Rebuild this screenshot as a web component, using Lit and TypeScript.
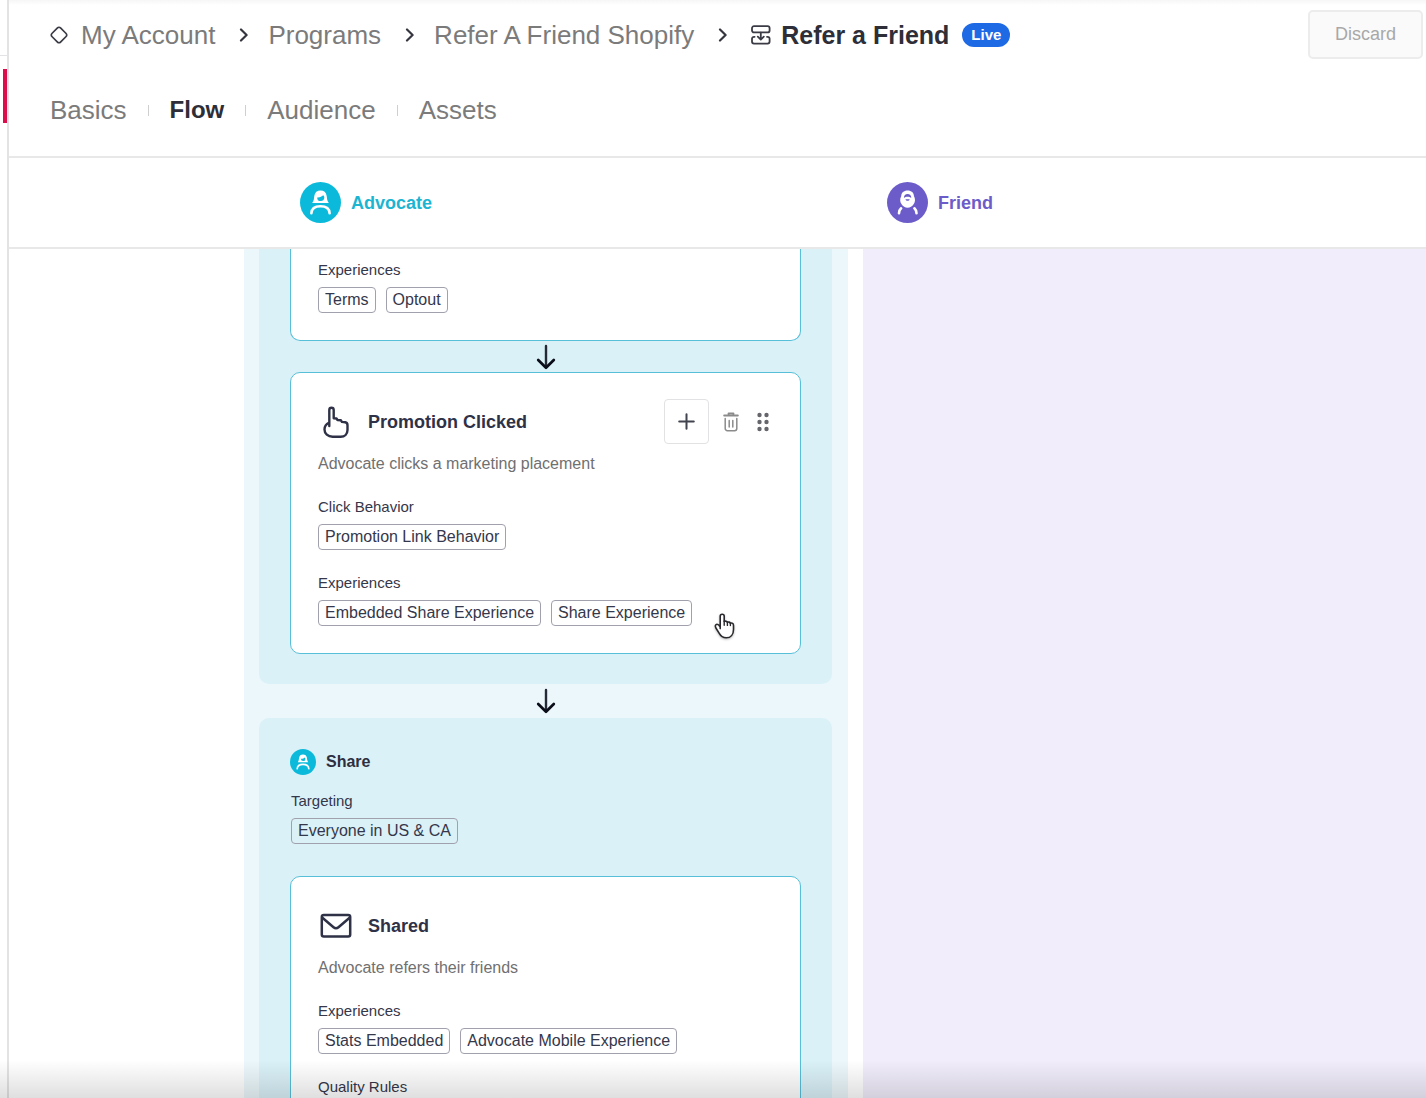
import { LitElement, html, css, svg, nothing } from "lit";
import { customElement, property } from "lit/decorators.js";

interface Section {
  label: string;
  chips: string[];
}

const icons = {
  diamond: svg`<svg width="18" height="18" viewBox="0 0 18 18" fill="none" stroke="#3a3b45" stroke-width="1.7" aria-hidden="true">
    <path d="M7.5 1.9 1.9 7.5a2.1 2.1 0 0 0 0 3l5.6 5.6a2.1 2.1 0 0 0 3 0l5.6-5.6a2.1 2.1 0 0 0 0-3l-5.6-5.6a2.1 2.1 0 0 0-3 0z"/></svg>`,
  chevron: svg`<svg width="13" height="14" viewBox="0 0 13 14" fill="none" stroke="#34353f" stroke-width="2.2" stroke-linecap="round" stroke-linejoin="round" aria-hidden="true">
    <path d="M4 1.5 9.6 7 4 12.5"/></svg>`,
  flow: svg`<svg width="20" height="20" viewBox="0 0 20 20" fill="none" stroke="#3a3b45" stroke-width="1.8" stroke-linecap="round" stroke-linejoin="round" aria-hidden="true">
    <rect x="1" y="1.2" width="17.6" height="6.2" rx="2"/>
    <path d="M3.6 11.8H3a2 2 0 0 0-2 2v2.8a2 2 0 0 0 2 2h13.600a2 2 0 0 0 2-2v-2.8a2 2 0 0 0-2-2H16M9.8 7.6v6.600M6.8 11.600l3 3 3-3"/></svg>`,
  down: svg`<svg width="20" height="26" viewBox="0 0 20 26" fill="none" stroke-linecap="round" stroke-linejoin="round" aria-hidden="true">
    <path d="M10 2V23" stroke="#262936" stroke-width="2.4"/><path d="M2.2 16 10 23.8l7.8-7.8" stroke="#0b0d18" stroke-width="2.7"/></svg>`,
  pointer: svg`<svg width="26" height="32" viewBox="0 0 26 32" fill="none" stroke="#2f3247" stroke-width="2.4" stroke-linejoin="round" stroke-linecap="round" aria-hidden="true">
    <path d="M6.3 20V4a2.2 2.2 0 0 1 4.4 0v8.200l2.800.3 1 1.500 3.400.3 1 1.600 3.300.4c1.500.3 2.300 1.300 2.300 2.900v4.800c0 4-2.800 6.700-6.800 6.700H9.600c-4.700 0-8.100-3.200-8.100-7.300 0-3.400 1.700-5.400 4.700-6.800"/></svg>`,
  mail: svg`<svg width="32" height="26" viewBox="0 0 32 26" fill="none" stroke="#2f3247" stroke-width="2.5" stroke-linejoin="round" stroke-linecap="round" aria-hidden="true">
    <rect x="1.8" y="2" width="28.4" height="21.6" rx="2"/><path d="M2.4 4.8 13.5 14.2a3.8 3.8 0 0 0 5 0L29.6 4.800"/></svg>`,
  plus: svg`<svg width="17" height="17" viewBox="0 0 17 17" fill="none" stroke="#41434f" stroke-width="2" stroke-linecap="round" aria-hidden="true">
    <path d="M8.5 1.2v14.600M1.200 8.500h14.600"/></svg>`,
  trash: svg`<svg width="16" height="20" viewBox="0 0 16 20" fill="none" stroke="#8b8b8b" stroke-width="1.5" stroke-linecap="round" stroke-linejoin="round" aria-hidden="true">
    <path d="M1.2 3.6h13.6" stroke-width="2"/><path d="M5.6 2.200V1.500h4.800v.7" stroke-width="2"/><path d="M2.200 6.500v10a2.200 2.200 0 0 0 2.200 2.200h7.200a2.200 2.200 0 0 0 2.200-2.200v-10M6.200 8.500v6.500M9.800 8.500v6.500"/></svg>`,
  grip: svg`<svg width="12" height="20" viewBox="0 0 12 20" fill="#65666c" aria-hidden="true">
    <circle cx="2.5" cy="3" r="2.2"/><circle cx="9.5" cy="3" r="2.2"/><circle cx="2.5" cy="10" r="2.2"/><circle cx="9.5" cy="10" r="2.2"/><circle cx="2.5" cy="17" r="2.2"/><circle cx="9.5" cy="17" r="2.2"/></svg>`,
  hand: svg`<svg width="22" height="27" viewBox="0 0 22 27" aria-hidden="true">
    <path d="M6.2 15.600V3.200a2 2 0 0 1 4 0V8.500c1.300-.7 2.700-.3 3.100.8 1.300-.6 2.600-.2 3 .9 1.800-.5 3.200.4 3.200 2.300v3.900c0 5-2.800 8.400-7.200 8.400-3.700 0-5.600-1.700-7.200-4.700L1.900 15c-1-1.900-.6-3.200.5-3.600 1.200-.4 2.300.2 3.800 2.600z" fill="#fff" stroke="#2a2a2e" stroke-width="1.6" stroke-linejoin="round"/>
    <path d="M10.2 8v4.200M13.400 9.200v3.200M16.400 10.300v2.300" stroke="#2a2a2e" stroke-width="1.4" stroke-linecap="round"/></svg>`,
};

const sharedStyles = css`
  :host {
    display: block;
  }
  svg {
    display: block;
    flex: none;
  }
`;

@customElement("persona-avatar")
class PersonaAvatar extends LitElement {
  @property() kind: "advocate" | "friend" = "advocate";
  @property({ type: Number }) size = 41;

  static styles = [
    sharedStyles,
    css`
      :host {
        flex: none;
      }
    `,
  ];

  render() {
    const art =
      this.kind === "advocate"
        ? svg`<circle cx="20.5" cy="20.5" r="20.5" fill="#0bbada"/>
            <path fill="#fff" d="M12.2 21c1.8-2.400 1.700-4.500 2.100-7.100.6-3.500 2.800-5.300 6.200-5.300s5.600 1.800 6.200 5.300c.4 2.600.3 4.700 2.100 7.100z"/>
            <path fill="#0bbada" d="M17.2 15.400c2.500.2 4.700-.7 6-2.100.8.7 1.100 1.400 1.100 2.300a3.500 3.500 0 0 1-7.100-.2z"/>
            <path fill="none" stroke="#fff" stroke-width="2.6" stroke-linecap="round" d="M11.4 31.200c.2-4.800 3.400-7 9.100-7s8.900 2.200 9.100 7"/>`
        : svg`<circle cx="20.5" cy="20.5" r="20.5" fill="#6c5cc9"/>
            <path fill="#fff" d="M20.600 8.600c3.900 0 6.200 2.200 6.400 5.600 1.500 2.700 1.300 6-.4 8.100-1.400 2.100-3.500 3.400-6 3.400s-4.600-1.300-6-3.400c-1.700-2.100-1.900-5.400-.4-8.100.2-3.400 2.500-5.600 6.400-5.600z"/>
            <path fill="#6c5cc9" d="M16.900 15.900c0-2.600 1.500-3.900 3.700-3.900s3.700 1.300 3.700 3.900c-1-.9-2.200-1.200-3.700-1.200s-2.700.3-3.700 1.200z"/>
            <path fill="#6c5cc9" d="M18.500 17.200h4.200c-.3 1-1.100 1.500-2.100 1.500s-1.800-.5-2.100-1.500z"/>
            <path fill="none" stroke="#fff" stroke-width="2.6" stroke-linecap="round" d="M12 31.200c0-2 .7-3.600 2.100-4.900M29.500 31.200c0-2-.7-3.600-2.100-4.900"/>`;
    return html`<svg width=${this.size} height=${this.size} viewBox="0 0 41 41" aria-hidden="true">${art}</svg>`;
  }
}

@customElement("chip-section")
class ChipSection extends LitElement {
  @property() label = "";
  @property({ type: Array }) chips: string[] = [];

  static styles = [
    sharedStyles,
    css`
      .label {
        margin: 0;
        font-size: 15px;
        font-weight: 400;
        line-height: 20px;
        color: #35374a;
      }
      .chips {
        display: flex;
        flex-wrap: wrap;
        gap: 10px;
        margin: 7px 0 0;
        padding: 0;
        list-style: none;
      }
      .chip {
        display: block;
        padding: 0 6px;
        border: 1px solid #a0a1ad;
        border-radius: 4px;
        font-size: 16px;
        line-height: 24px;
        color: #35374a;
        text-decoration: none;
        white-space: nowrap;
      }
    `,
  ];

  render() {
    return html`<h4 class="label">${this.label}</h4>
      ${this.chips.length
        ? html`<ul class="chips">
            ${this.chips.map((c) => html`<li><a class="chip" href="#">${c}</a></li>`)}
          </ul>`
        : nothing}`;
  }
}

@customElement("step-card")
class StepCard extends LitElement {
  @property() heading = "";
  @property() description = "";
  @property() icon: "pointer" | "mail" | "" = "";
  @property({ type: Boolean }) controls = false;
  @property({ type: Array }) sections: Section[] = [];

  static styles = [
    sharedStyles,
    css`
      .card {
        padding: 26px 27px 27px;
        background: #fff;
        border: 1px solid #58bfd8;
        border-radius: 10px;
      }
      .card.continued {
        padding-top: 11px;
        border-top: 0;
        border-radius: 0 0 10px 10px;
      }
      .head {
        display: flex;
        align-items: center;
        height: 45px;
      }
      .icon {
        display: flex;
        justify-content: center;
        width: 36px;
        margin-right: 14px;
      }
      .title {
        flex: 1;
        margin: 0;
        font-size: 18px;
        line-height: 24px;
        color: #2f3247;
      }
      .controls {
        display: flex;
        align-items: center;
        gap: 12px;
      }
      .control {
        display: flex;
        align-items: center;
        justify-content: center;
        width: 20px;
        height: 24px;
        padding: 0;
        border: 0;
        background: none;
      }
      .control.add {
        width: 45px;
        height: 45px;
        border: 1px solid #e2e2e4;
        border-radius: 4px;
        background: #fff;
      }
      .description {
        margin: 10px 0 0;
        font-size: 16px;
        line-height: 20px;
        color: #707070;
      }
      .section {
        margin-top: 23px;
      }
      .continued .section {
        margin-top: 0;
      }
    `,
  ];

  render() {
    return html`<article class="card ${this.heading ? "" : "continued"}">
      ${this.heading
        ? html`<header class="head">
              <span class="icon">${this.icon ? icons[this.icon] : nothing}</span>
              <h3 class="title">${this.heading}</h3>
              ${this.controls
                ? html`<div class="controls">
                    <button class="control add" type="button" aria-label="Add">${icons.plus}</button>
                    <button class="control" type="button" aria-label="Delete">${icons.trash}</button>
                    <button class="control" type="button" aria-label="Move">${icons.grip}</button>
                  </div>`
                : nothing}
            </header>
            <p class="description">${this.description}</p>`
        : nothing}
      ${this.sections.map(
        (s) => html`<chip-section class="section" .label=${s.label} .chips=${s.chips}></chip-section>`
      )}
    </article>`;
  }
}

@customElement("app-root")
class AppRoot extends LitElement {
  static styles = [
    sharedStyles,
    css`
      :host {
        font-family: "Liberation Sans", Arial, Helvetica, sans-serif;
      }
      .app {
        position: relative;
        display: flex;
        height: 100vh;
        overflow: hidden;
        background: #fff;
      }
      .rail {
        flex: none;
        width: 7px;
        border-right: 2px solid #e3e3e5;
      }
      .rail-top {
        height: 55px;
        border-bottom: 1px solid #e3e3e5;
      }
      .rail-active {
        height: 54px;
        margin: 13px 0 0 3px;
        background: #dc0d4b;
      }
      .main {
        display: flex;
        flex: 1;
        flex-direction: column;
        min-width: 0;
      }
      .top {
        padding: 10px 3px 31px 41px;
        background: linear-gradient(#f6f6f6, #fff 5px);
        border-bottom: 2px solid #e8e8e9;
      }
      .top-row {
        display: flex;
        align-items: center;
        justify-content: space-between;
      }
      .crumbs {
        display: flex;
        align-items: center;
        margin: 0;
        padding: 0;
        list-style: none;
        font-size: 26px;
        line-height: 30px;
        white-space: nowrap;
      }
      .crumb {
        display: flex;
        align-items: center;
      }
      .crumb-icon {
        margin-right: 13px;
      }
      .flow-icon {
        margin: 0 10px 0 4px;
      }
      .separator {
        margin: 0 18px 0 22px;
      }
      .link {
        color: #7b7b7b;
        text-decoration: none;
      }
      .current {
        margin: 0;
        font-size: 25px;
        line-height: 30px;
        color: #2d2e37;
      }
      .badge {
        margin-left: 13px;
        padding: 0 9px;
        border-radius: 12px;
        background: #1e69e4;
        color: #fff;
        font-size: 15px;
        font-weight: 700;
        line-height: 24px;
      }
      .discard {
        width: 115px;
        height: 49px;
        border: 2px solid #ececec;
        border-radius: 5px;
        background: #fafafa;
        color: #a8a8a8;
        font: 18px "Liberation Sans", Arial, sans-serif;
      }
      .tabs {
        display: flex;
        align-items: center;
        gap: 21px;
        margin-top: 36px;
        font-size: 26px;
        line-height: 30px;
      }
      .tick {
        width: 1px;
        height: 11px;
        background: #cfcfcf;
      }
      .tab-active {
        font-size: 24px;
        font-weight: 700;
        color: #2d2e37;
      }
      .personas {
        display: grid;
        grid-template-columns: 587px 1fr;
        align-items: center;
        height: 89px;
        padding-left: 291px;
        border-bottom: 2px solid #e8e8e9;
      }
      .persona {
        display: flex;
        align-items: center;
        gap: 10px;
        margin: 0;
        font-size: 18px;
        line-height: 24px;
      }
      .persona-advocate {
        color: #1bb5d2;
      }
      .persona-friend {
        color: #6c5cc9;
      }
      .canvas {
        display: grid;
        flex: 1;
        grid-template-columns: 604px 1fr;
        gap: 15px;
        min-height: 0;
        padding-left: 235px;
        overflow: auto;
        scrollbar-width: none;
      }
      .lane-advocate {
        padding: 0 16px 0 15px;
        background: #ebf7fb;
      }
      .lane-friend {
        background: #f1edfb;
      }
      .group {
        padding: 31px 31px 30px;
        border-radius: 10px;
        background: #daf1f8;
      }
      .group-continued {
        padding-top: 0;
        border-radius: 0 0 10px 10px;
      }
      .arrow {
        display: flex;
        align-items: center;
        justify-content: center;
        height: 31px;
      }
      .arrow-group {
        height: 34px;
      }
      .group-title {
        display: flex;
        align-items: center;
        gap: 10px;
        margin: 0;
        font-size: 16px;
        line-height: 26px;
        color: #2d2f40;
      }
      .targeting {
        margin: 16px 0 32px 1px;
      }
      .cursor {
        position: absolute;
        top: 613px;
        left: 714px;
        filter: drop-shadow(0 1px 1px #0004);
        pointer-events: none;
      }
      .shade {
        position: absolute;
        right: 0;
        bottom: 0;
        left: 0;
        height: 38px;
        background: linear-gradient(transparent, #00000020);
        pointer-events: none;
      }
    `,
  ];

  render() {
    const sep = html`<span class="separator">${icons.chevron}</span>`;
    return html`<div class="app">
      <aside class="rail">
        <div class="rail-top"></div>
        <div class="rail-active"></div>
      </aside>
      <main class="main">
        <header class="top">
          <div class="top-row">
            <ol class="crumbs">
              <li class="crumb">
                <span class="crumb-icon">${icons.diamond}</span><a class="link" href="#">My Account</a>${sep}
              </li>
              <li class="crumb"><a class="link" href="#">Programs</a>${sep}</li>
              <li class="crumb"><a class="link" href="#">Refer A Friend Shopify</a>${sep}</li>
              <li class="crumb">
                <span class="flow-icon">${icons.flow}</span>
                <h1 class="current">Refer a Friend</h1>
                <span class="badge">Live</span>
              </li>
            </ol>
            <button class="discard" type="button" disabled>Discard</button>
          </div>
          <nav class="tabs">
            <a class="link" href="#">Basics</a><span class="tick"></span>
            <a class="link tab-active" href="#" aria-current="page">Flow</a><span class="tick"></span>
            <a class="link" href="#">Audience</a><span class="tick"></span>
            <a class="link" href="#">Assets</a>
          </nav>
        </header>
        <div class="personas">
          <h2 class="persona persona-advocate"><persona-avatar kind="advocate"></persona-avatar>Advocate</h2>
          <h2 class="persona persona-friend"><persona-avatar kind="friend"></persona-avatar>Friend</h2>
        </div>
        <div class="canvas">
          <section class="lane-advocate">
            <div class="group group-continued">
              <step-card .sections=${[{ label: "Experiences", chips: ["Terms", "Optout"] }]}></step-card>
              <div class="arrow">${icons.down}</div>
              <step-card
                heading="Promotion Clicked"
                description="Advocate clicks a marketing placement"
                icon="pointer"
                controls
                .sections=${[
                  { label: "Click Behavior", chips: ["Promotion Link Behavior"] },
                  { label: "Experiences", chips: ["Embedded Share Experience", "Share Experience"] },
                ]}
              ></step-card>
            </div>
            <div class="arrow arrow-group">${icons.down}</div>
            <div class="group">
              <h2 class="group-title"><persona-avatar kind="advocate" size="26"></persona-avatar>Share</h2>
              <chip-section class="targeting" label="Targeting" .chips=${["Everyone in US & CA"]}></chip-section>
              <step-card
                heading="Shared"
                description="Advocate refers their friends"
                icon="mail"
                .sections=${[
                  { label: "Experiences", chips: ["Stats Embedded", "Advocate Mobile Experience"] },
                  { label: "Quality Rules", chips: [] },
                ]}
              ></step-card>
            </div>
          </section>
          <section class="lane-friend"></section>
        </div>
      </main>
      <div class="cursor">${icons.hand}</div>
      <div class="shade"></div>
    </div>`;
  }
}
